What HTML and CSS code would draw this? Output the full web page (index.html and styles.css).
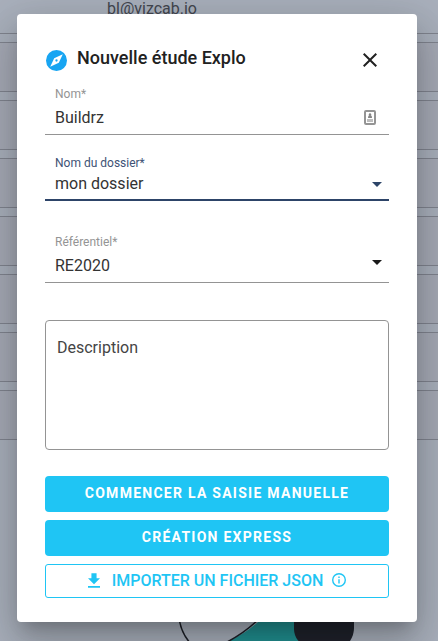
FILE: index.html
```html
<!DOCTYPE html>
<html lang="fr">
<head>
<meta charset="utf-8">
<meta name="viewport" content="width=device-width, initial-scale=1">
<title>Nouvelle étude Explo</title>
<link rel="stylesheet" href="styles.css">
</head>
<body>
<div class="page">
  <div class="account">bl@vizcab.io</div>
  <div class="rows">
    <div class="row"></div><div class="row"></div><div class="row"></div><div class="row"></div>
    <div class="row"></div><div class="row"></div><div class="row"></div>
  </div>
  <svg class="drawing" viewBox="0 0 180 41" aria-hidden="true">
    <path d="M79 22Q67 33 50 41H119V0H90Z" fill="#219091"/>
    <path d="M0 16Q1 32 12 44M48 42Q64 34 79 20" fill="none" stroke="#1d2028" stroke-width="1.5"/>
    <path d="M115 0H175V28Q175 37 168 45H124Q115 39 115 29Z" fill="#20232c"/>
  </svg>
</div>
<div class="overlay">
  <form class="dialog" role="dialog" aria-labelledby="title">
    <header class="header">
      <svg class="compass" viewBox="2 2 20 20" aria-hidden="true"><path fill="#18a5f2" d="M12 10.900a1.100 1.100 0 1 0 0 2.200 1.100 1.100 0 0 0 0-2.200zM12 2a10 10 0 1 0 0 20 10 10 0 0 0 0-20zm2.190 12.190L6 18l3.810-8.190L18 6z"/></svg>
      <h1 class="title" id="title">Nouvelle étude Explo</h1>
      <button class="close" type="button" aria-label="Fermer"><svg viewBox="0 0 24 24" width="24" height="24"><path fill="#212121" d="M19 6.410 17.590 5 12 10.590 6.410 5 5 6.410 10.590 12 5 17.590 6.410 19 12 13.410 17.590 19 19 17.590 13.410 12z"/></svg></button>
    </header>
    <div class="field">
      <label class="label" for="name">Nom*</label>
      <div class="control">
        <input class="value" id="name" type="text" value="Buildrz">
        <svg class="contact" viewBox="0 0 12 16" aria-hidden="true"><rect x="1" y="1" width="10" height="13" rx="1" fill="#fff" stroke="#949494" stroke-width="2"/><circle cx="6" cy="4.500" r="1.200" fill="#858585"/><path d="M4 8q0-3 2-3t2 3z" fill="#858585"/><path d="M3 9h6v3H3z" fill="#bdbdbd"/></svg>
      </div>
    </div>
    <div class="field field-active">
      <label class="label" for="folder">Nom du dossier*</label>
      <div class="control">
        <select class="value" id="folder"><option>mon dossier</option></select>
        <svg class="arrow" viewBox="0 0 10 5" aria-hidden="true"><path d="M0 0h10L5 5z" fill="currentColor"/></svg>
      </div>
    </div>
    <div class="field field-reference">
      <label class="label" for="reference">Référentiel*</label>
      <div class="control">
        <select class="value" id="reference"><option>RE2020</option></select>
        <svg class="arrow" viewBox="0 0 10 5" aria-hidden="true"><path d="M0 0h10L5 5z" fill="currentColor"/></svg>
      </div>
    </div>
    <textarea class="description" aria-label="Description" placeholder="Description"></textarea>
    <div class="actions">
      <button class="button" type="button">COMMENCER LA SAISIE MANUELLE</button>
      <button class="button" type="button">CRÉATION EXPRESS</button>
      <button class="button button-outlined" type="button">
        <svg class="download" viewBox="5 3 14 17" aria-hidden="true"><path fill="currentColor" d="M19 9h-4V3H9v6H5l7 7zM5 18v2h14v-2z"/></svg>
        <span>IMPORTER UN FICHIER JSON</span>
        <svg class="info" viewBox="2 2 20 20" aria-hidden="true"><path fill="currentColor" d="M11 7h2v2h-2zm0 4h2v6h-2zm1-9a10 10 0 1 0 0 20 10 10 0 0 0 0-20zm0 18a8 8 0 1 1 0-16 8 8 0 0 1 0 16z"/></svg>
      </button>
    </div>
  </form>
</div>
</body>
</html>
```
FILE: styles.css
```css
* {
  box-sizing: border-box;
}

body {
  margin: 0;
  min-height: 100vh;
  overflow: hidden;
  background: #a9b0bc;
  color: #333;
  font-family: Roboto, "Liberation Sans", sans-serif;
  font-size: 16px;
  line-height: 24px;
}

.page {
  display: flex;
  flex-direction: column;
  height: 100vh;
}

.account {
  height: 34px;
  padding-left: 107px;
  border-bottom: 1px solid #80848f;
  color: #42464f;
  line-height: 18px;
}

.rows {
  display: grid;
  gap: 8px;
  padding-top: 8px;
}

.row {
  height: 50px;
  border: solid #80848f;
  border-width: 1px 0;
  background: #a6aab6;
}

.drawing {
  width: 180px;
  height: 41px;
  margin: auto 0 0 179px;
}

.overlay {
  position: absolute;
  inset: 0;
  padding: 14px 21px 14px 17px;
}

.dialog {
  padding: 32px 28px 24px;
  border-radius: 4px;
  background: #fff;
  box-shadow: 0 11px 15px -7px rgba(0, 0, 0, 0.2), 0 24px 38px 3px rgba(0, 0, 0, 0.14), 0 9px 46px 8px rgba(0, 0, 0, 0.12);
}

.header {
  display: flex;
  align-items: center;
  height: 28px;
  margin-bottom: 12px;
}

.compass {
  width: 21px;
  height: 21px;
  margin: 0 10px 0 1px;
}

.title {
  flex: 1;
  margin: 0 0 4px;
  color: #212121;
  font-size: 18px;
  font-weight: 500;
}

.close {
  display: flex;
  margin-right: 7px;
  padding: 0;
  border: 0;
  background: none;
}

.field {
  padding: 0 7px 4px 10px;
  border-bottom: 1px solid #949494;
}

.label {
  display: block;
  margin-bottom: 4px;
  color: #949494;
  font-size: 12px;
  line-height: 16px;
}

.control {
  display: flex;
  align-items: center;
}

.value {
  flex: 1;
  min-width: 0;
  height: 24px;
  padding: 0;
  border: 0;
  outline: 0;
  appearance: none;
  background: none;
  color: #333;
  font: inherit;
}

.contact {
  width: 12px;
  height: 16px;
  margin-right: 6px;
}

.arrow {
  width: 10px;
  height: 5px;
  color: #1a1a1a;
}

.field-active {
  margin-top: 20px;
  padding-bottom: 3px;
  border-bottom: 2px solid #2d4468;
}

.field-active .label {
  margin-bottom: 1px;
  color: #405275;
}

.field-active .arrow {
  color: #2d4468;
}

.field-reference {
  margin-top: 33px;
}

.field-reference .arrow {
  margin-bottom: 8px;
}

.description {
  display: block;
  width: 100%;
  height: 130px;
  margin: 37px 0 26px;
  padding: 15px 11px;
  border: 1px solid #949494;
  border-radius: 4px;
  resize: none;
  color: #333;
  font: inherit;
}

.description::placeholder {
  color: #444;
}

.actions {
  display: grid;
  gap: 8px;
}

.button {
  display: flex;
  align-items: center;
  justify-content: center;
  height: 36px;
  padding: 0 16px 2px;
  border: 0;
  border-radius: 4px;
  background: #1fc5f4;
  color: #fff;
  font-family: inherit;
  font-size: 14px;
  font-weight: 700;
  letter-spacing: 0.09em;
}

.button-outlined {
  height: 34px;
  border: 1px solid #1fc5f4;
  border-radius: 3px;
  background: #fff;
  color: #1fc5f4;
  font-size: 16px;
  font-weight: 500;
  letter-spacing: normal;
}

.download {
  width: 12px;
  height: 15px;
  margin-right: 12px;
}

.info {
  width: 14px;
  height: 14px;
  margin-left: 9px;
}
```
